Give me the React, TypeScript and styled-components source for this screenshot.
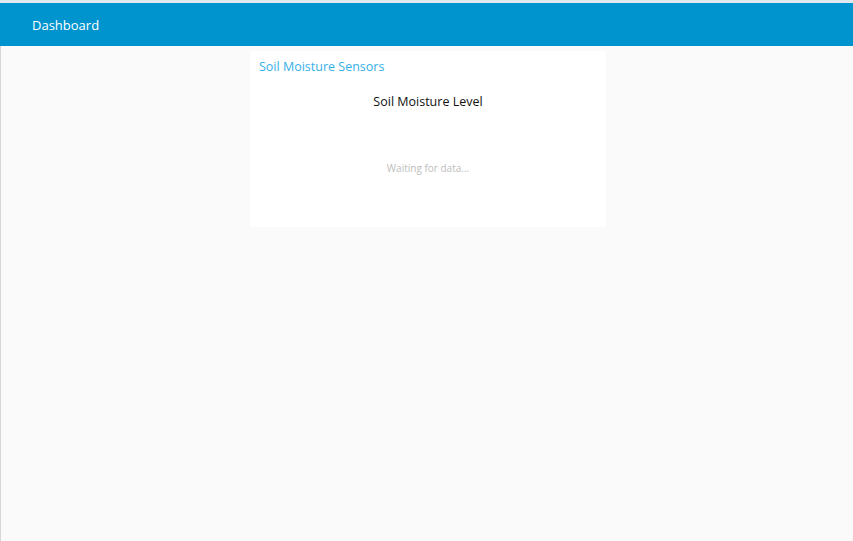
import React from 'react';
import styled, { createGlobalStyle } from 'styled-components';

const GlobalStyle = createGlobalStyle`
  html, body {
    margin: 0;
    padding: 0;
    height: 100%;
    background: #fafafa;
    font-family: "Open Sans", "Noto Sans", sans-serif;
  }
  #root {
    height: 100%;
  }
`;

const Page = styled.div`
  height: 541px;
  display: flex;
  flex-direction: column;
  border-top: 3px solid #dfe9ef;
  box-sizing: border-box;
  overflow: hidden;
`;

const Toolbar = styled.header`
  height: 43px;
  background: #0094ce;
  display: flex;
  align-items: center;
  padding-left: 32px;
  color: #ffffff;
  font-size: 13px;
  flex-shrink: 0;
`;

const Content = styled.main`
  flex: 1;
  border-left: 1px solid #d6d6d6;
  display: flex;
  justify-content: center;
  padding-top: 5px;
`;

const Card = styled.section`
  width: 356px;
  height: 176px;
  background: #ffffff;
  margin-left: 2px;
  display: flex;
  flex-direction: column;
`;

const CardTitle = styled.h2`
  margin: 0;
  padding: 7px 0 0 9px;
  font-size: 12.5px;
  font-weight: 400;
  color: #35afe8;
  line-height: 18px;
`;

const ChartTitle = styled.div`
  margin-top: 17px;
  text-align: center;
  font-size: 12.5px;
  color: #111;
  line-height: 18px;
`;

const Waiting = styled.div`
  margin-top: 50px;
  text-align: center;
  font-size: 10px;
  color: #bdbdbd;
  line-height: 14px;
`;

const App: React.FC = () => {
  return (
    <>
      <GlobalStyle />
      <Page>
        <Toolbar>Dashboard</Toolbar>
        <Content>
          <Card>
            <CardTitle>Soil Moisture Sensors</CardTitle>
            <ChartTitle>Soil Moisture Level</ChartTitle>
            <Waiting>Waiting for data...</Waiting>
          </Card>
        </Content>
      </Page>
    </>
  );
};

export default App;
